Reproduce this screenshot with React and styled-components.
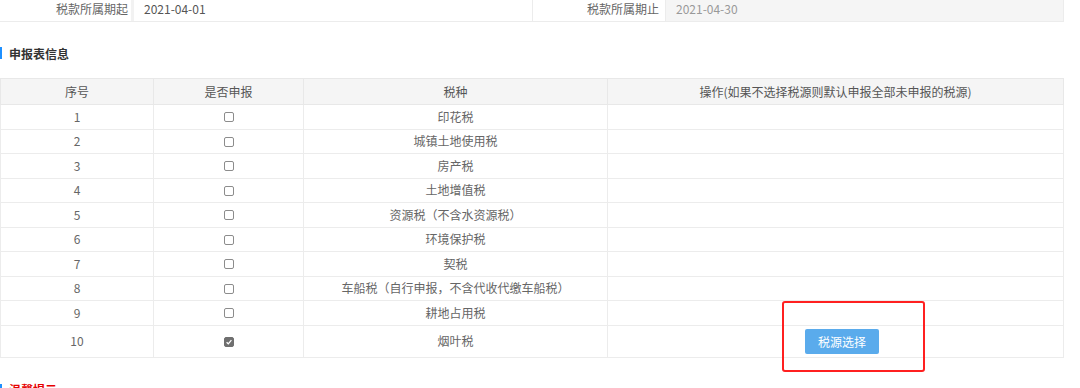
import React from "react";
import styled, { createGlobalStyle } from "styled-components";

const Global = createGlobalStyle`
  html, body { margin: 0; padding: 0; background: #fff; }
  body {
    font-family: "Microsoft YaHei", "Noto Sans CJK SC", "Noto Sans", sans-serif;
    font-size: 12px;
    color: #666;
    overflow: hidden;
  }
`;

const Page = styled.div`
  position: relative;
  width: 1064px;
  height: 388px;
  overflow: hidden;
`;

const FormRow = styled.div`
  display: grid;
  grid-template-columns: 131px 402px 132px 1fr;
  height: 22px;
  border-bottom: 1px solid #ececec;
  box-sizing: border-box;
`;

const Label = styled.div`
  text-align: right;
  padding-right: ${(p) => p.$pr || 4}px;
  line-height: 18px;
  color: #666;
  background: #fff;
`;

const Value = styled.div`
  padding-left: ${(p) => p.$pl || 10}px;
  line-height: 18px;
  color: ${(p) => (p.$disabled ? "#999" : "#555")};
  background: ${(p) => (p.$disabled ? "#f5f5f5" : "#fff")};
  border-left: ${(p) => (p.$disabled ? "1px solid #ececec" : "3px solid #f2f2f2")};
  border-right: 1px solid #ececec;
`;

const SectionTitle = styled.div`
  display: flex;
  align-items: center;
  gap: 7px;
  margin-top: ${(p) => p.$mt}px;
  height: 16px;
  font-weight: bold;
  font-size: 12px;
  color: ${(p) => p.$color || "#333"};
`;

const Bar = styled.span`
  display: inline-block;
  width: 2px;
  height: 12px;
  background: #1e90ff;
`;

const Table = styled.table`
  margin-top: 17px;
  width: 1064px;
  border-collapse: collapse;
  table-layout: fixed;
  border: 1px solid #e8e8e8;
`;

const Th = styled.th`
  height: 25px;
  padding: 0;
  font-weight: normal;
  color: #555;
  background: #f5f5f5;
  border: 1px solid #e8e8e8;
  text-align: center;
`;

const Td = styled.td`
  height: ${(p) => p.$h || 23.5}px;
  padding: 0;
  border: 1px solid #ececec;
  text-align: center;
  color: #666;
  line-height: 14px;
`;

const Box = styled.span`
  display: inline-block;
  width: 10px;
  height: 10px;
  box-sizing: border-box;
  border-radius: 2px;
  border: 1px solid ${(p) => (p.$checked ? "#6f6f6f" : "#8c8c8c")};
  background: ${(p) => (p.$checked ? "#6f6f6f" : "#fff")};
  vertical-align: middle;
  position: relative;
  top: -1px;
  svg { display: block; }
`;

const OpCell = styled.div`
  display: flex;
  justify-content: center;
  padding-left: 13px;
`;

const Button = styled.button`
  width: 74px;
  height: 25px;
  border: none;
  border-radius: 2px;
  background: #5aabec;
  color: #fff;
  font-family: inherit;
  font-size: 12px;
  padding: 0;
`;

const Highlight = styled.div`
  position: absolute;
  left: 782px;
  top: 301px;
  width: 143px;
  height: 71px;
  box-sizing: border-box;
  border: 2.5px solid #ff2020;
  border-radius: 3px;
  pointer-events: none;
`;

const Checkbox = ({ checked }) => (
  <Box $checked={checked}>
    {checked && (
      <svg width="8" height="8" viewBox="0 0 8 8">
        <path d="M1.6 4.2 L3.3 5.8 L6.4 2.2" fill="none" stroke="#fff" strokeWidth="1.3" />
      </svg>
    )}
  </Box>
);

const rows = [
  "印花税",
  "城镇土地使用税",
  "房产税",
  "土地增值税",
  "资源税（不含水资源税）",
  "环境保护税",
  "契税",
  "车船税（自行申报，不含代收代缴车船税）",
  "耕地占用税",
  "烟叶税",
];

export default function App() {
  return (
    <>
      <Global />
      <Page>
        <FormRow>
          <Label $pr={3}>税款所属期起</Label>
          <Value>2021-04-01</Value>
          <Label $pr={6}>税款所属期止</Label>
          <Value $disabled>2021-04-30</Value>
        </FormRow>
        <SectionTitle $mt={23}>
          <Bar />
          申报表信息
        </SectionTitle>
        <Table>
          <colgroup>
            <col style={{ width: 153 }} />
            <col style={{ width: 150 }} />
            <col style={{ width: 304 }} />
            <col />
          </colgroup>
          <thead>
            <tr>
              <Th>序号</Th>
              <Th>是否申报</Th>
              <Th>税种</Th>
              <Th>操作(如果不选择税源则默认申报全部未申报的税源)</Th>
            </tr>
          </thead>
          <tbody>
            {rows.map((name, i) => {
              const last = i === rows.length - 1;
              return (
                <tr key={name}>
                  <Td $h={last ? 31 : undefined}>{i + 1}</Td>
                  <Td $h={last ? 31 : undefined}>
                    <Checkbox checked={last} />
                  </Td>
                  <Td $h={last ? 31 : undefined}>{name}</Td>
                  <Td $h={last ? 31 : undefined}>
                    {last && (
                      <OpCell>
                        <Button>税源选择</Button>
                      </OpCell>
                    )}
                  </Td>
                </tr>
              );
            })}
          </tbody>
        </Table>
        <SectionTitle $mt={24} $color="#e60000">
          <Bar />
          温馨提示
        </SectionTitle>
        <Highlight />
      </Page>
    </>
  );
}
